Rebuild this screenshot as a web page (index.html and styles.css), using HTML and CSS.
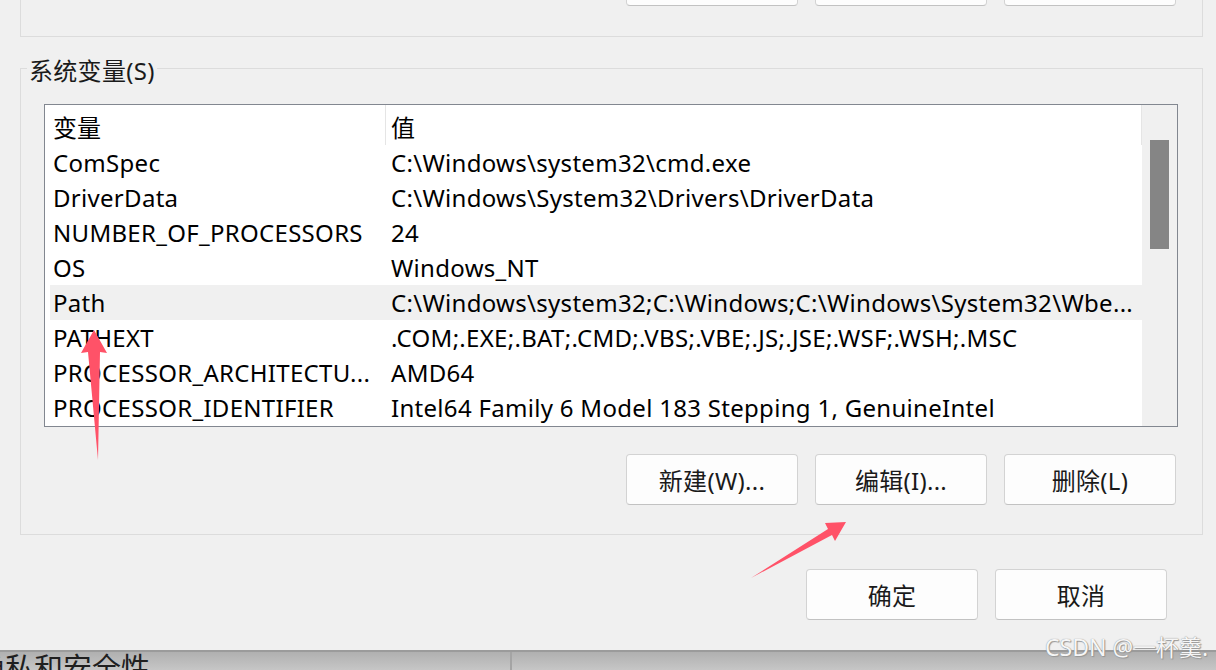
FILE: index.html
```html
<!DOCTYPE html>
<html lang="zh-CN">
<head>
<meta charset="utf-8">
<title>环境变量</title>
<link rel="stylesheet" href="styles.css">
</head>
<body>
<div class="screen">
  <div class="dialog">
    <div class="group-top">
      <div class="btn-row">
        <button class="btn" aria-label="新建(N)..."></button>
        <button class="btn" aria-label="编辑(E)..."></button>
        <button class="btn" aria-label="删除(D)"></button>
      </div>
    </div>

    <fieldset class="group-sys">
      <legend class="group-label">系统变量(S)</legend>
      <div class="list">
        <div class="list-main">
          <div class="list-head">
            <div class="head-name">变量</div>
            <div class="head-val">值</div>
          </div>
          <div class="rows">
            <div class="row"><span class="c1">ComSpec</span><span class="c2">C:\Windows\system32\cmd.exe</span></div>
            <div class="row"><span class="c1">DriverData</span><span class="c2">C:\Windows\System32\Drivers\DriverData</span></div>
            <div class="row"><span class="c1">NUMBER_OF_PROCESSORS</span><span class="c2">24</span></div>
            <div class="row"><span class="c1">OS</span><span class="c2">Windows_NT</span></div>
            <div class="row sel"><span class="c1">Path</span><span class="c2">C:\Windows\system32;C:\Windows;C:\Windows\System32\Wbe...</span></div>
            <div class="row"><span class="c1">PATHEXT</span><span class="c2">.COM;.EXE;.BAT;.CMD;.VBS;.VBE;.JS;.JSE;.WSF;.WSH;.MSC</span></div>
            <div class="row"><span class="c1">PROCESSOR_ARCHITECTU...</span><span class="c2">AMD64</span></div>
            <div class="row"><span class="c1">PROCESSOR_IDENTIFIER</span><span class="c2">Intel64 Family 6 Model 183 Stepping 1, GenuineIntel</span></div>
          </div>
        </div>
        <div class="scroll"><div class="thumb"></div></div>
      </div>
      <div class="btn-row sys-btns">
        <button class="btn">新建(W)...</button>
        <button class="btn">编辑(I)...</button>
        <button class="btn">删除(L)</button>
      </div>
    </fieldset>

    <div class="btn-row dlg-actions">
      <button class="btn">确定</button>
      <button class="btn">取消</button>
    </div>
  </div>

  <div class="taskbar">
    <div class="tb-left"><span class="tb-text">隐私和安全性</span></div>
    <div class="tb-right"></div>
  </div>

  <svg class="arrows" width="1216" height="670" viewBox="0 0 1216 670" aria-hidden="true">
    <polygon points="94,330 107,353 100,352 98,460 88,352 81,353" fill="#ff5268"/>
    <polygon points="846,522 835,541 832,535 751,578 828,529 825,523" fill="#ff5268"/>
  </svg>

  <div class="watermark">CSDN @一杯羹.</div>
</div>
</body>
</html>
```

FILE: styles.css
```css
* {
  box-sizing: border-box;
}

html, body {
  margin: 0;
  padding: 0;
}

body {
  width: 1216px;
  height: 670px;
  overflow: hidden;
  background: #f0f0f0;
  font-family: "Noto Sans", "Noto Sans CJK SC", sans-serif;
  color: #000;
}

.screen {
  position: relative;
  width: 1216px;
  height: 670px;
  overflow: hidden;
}

.dialog {
  height: 650px;
  background: #f0f0f0;
  display: flex;
  flex-direction: column;
}

.group-top {
  flex: none;
  margin: -70px 0 0 20px;
  width: 1183px;
  height: 107px;
  border: 1px solid #dcdcdc;
  display: flex;
  justify-content: flex-end;
  align-items: flex-end;
  padding: 0 26px 30px 0;
}

.btn-row {
  display: flex;
  gap: 17px;
}

.btn {
  width: 172px;
  height: 51px;
  padding: 0;
  background: #fdfdfd;
  border: 1px solid #d3d3d3;
  border-bottom-color: #c2c2c2;
  border-radius: 4px;
  font-family: "Noto Sans", "Noto Sans CJK SC", sans-serif;
  font-size: 24px;
  letter-spacing: 0.3px;
  color: #1a1a1a;
}

.group-sys {
  flex: none;
  margin: 14px 0 0 20px;
  width: 1183px;
  min-width: 0;
  border: 1px solid #dcdcdc;
  padding: 0 0 29px 0;
}

.group-label {
  margin-left: 6px;
  padding: 5px 2px 0;
  font-size: 24px;
  line-height: 30px;
  letter-spacing: 0.3px;
  color: #1a1a1a;
}

.list {
  margin: 18px 0 0 23px;
  width: 1134px;
  height: 323px;
  border: 1px solid #828790;
  background: #fff;
  display: flex;
}

.list-main {
  width: 1097px;
  flex: none;
}

.list-head {
  display: flex;
  height: 40px;
  font-size: 24px;
}

.head-name {
  width: 341px;
  flex: none;
  border-right: 1px solid #e5e5e5;
  padding: 2px 0 0 8px;
  display: flex;
  align-items: center;
}

.head-val {
  flex: 1;
  border-right: 1px solid #e5e5e5;
  padding: 2px 0 0 5px;
  display: flex;
  align-items: center;
}

.rows {
  margin-left: 5px;
}

.row {
  display: flex;
  align-items: center;
  height: 35px;
  font-size: 24px;
  letter-spacing: 0.3px;
  white-space: nowrap;
}

.row.sel {
  background: #f0f0f0;
}

.c1 {
  width: 335px;
  flex: none;
  padding-left: 3px;
  overflow: hidden;
}

.c2 {
  flex: 1;
  padding-left: 6px;
  overflow: hidden;
}

.scroll {
  flex: 1;
  background: #f0f0f0;
  padding: 35px 0 0 8px;
}

.thumb {
  width: 19px;
  height: 109px;
  background: #858585;
}

.sys-btns {
  justify-content: flex-end;
  margin: 27px 26px 0 0;
}

.dlg-actions {
  justify-content: flex-end;
  margin: 34px 49px 0 0;
}

.taskbar {
  height: 20px;
  border-top: 2px solid #9b9b9b;
  background: linear-gradient(#b0b0b0, #c6c6c6);
  display: flex;
}

.tb-left {
  width: 512px;
  flex: none;
  border-right: 2px solid #a4a4a4;
  overflow: hidden;
}

.tb-text {
  display: block;
  margin-left: -24px;
  font-family: "Noto Sans CJK SC", sans-serif;
  font-size: 29px;
  line-height: 28px;
  color: #1f1f1f;
  white-space: nowrap;
}

.tb-right {
  flex: 1;
}

.arrows {
  position: absolute;
  left: 0;
  top: 0;
  pointer-events: none;
}

.watermark {
  position: absolute;
  left: 1045px;
  top: 633px;
  font-family: "Noto Sans", "Noto Sans CJK SC", sans-serif;
  font-size: 23px;
  line-height: 28px;
  color: #f6f6f6;
  white-space: nowrap;
  text-shadow: 0 0 1px #7a7a7a, 1px 1px 1px #9a9a9a;
}
```
